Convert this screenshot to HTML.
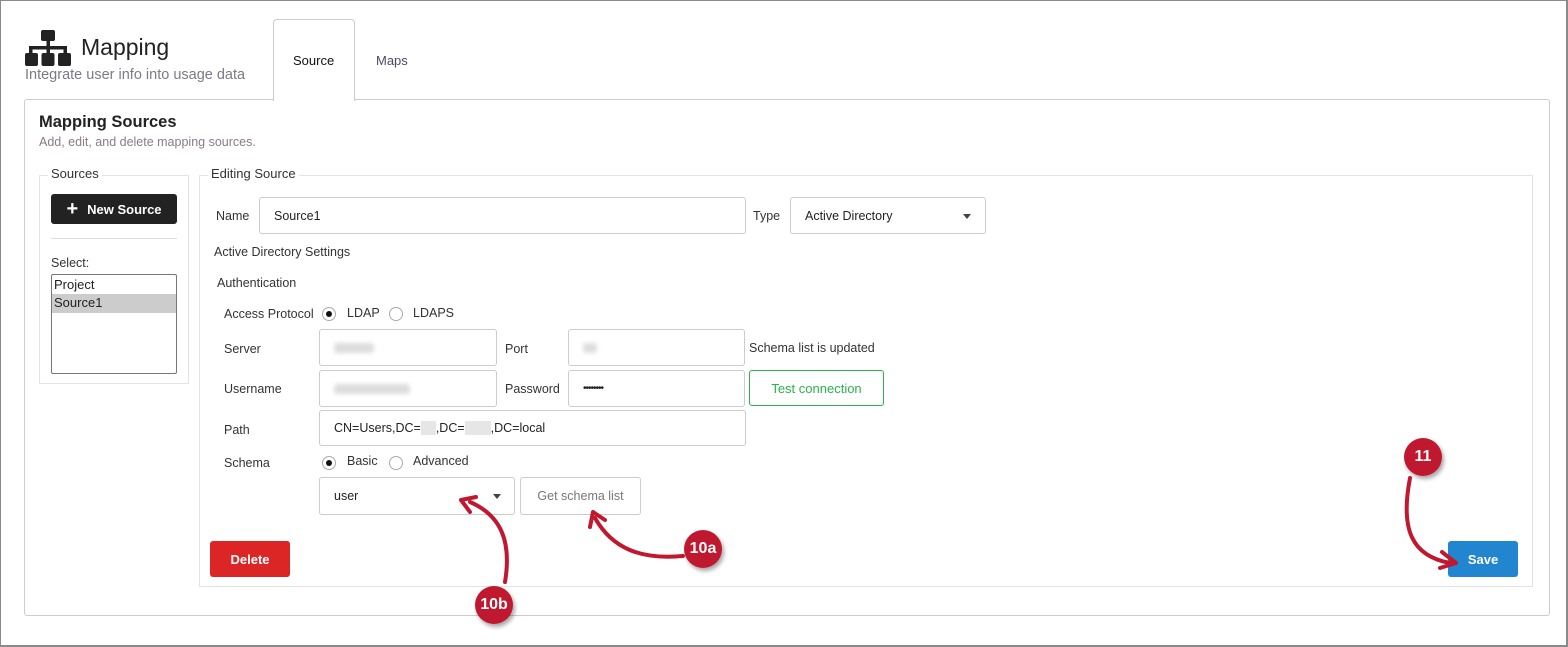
<!DOCTYPE html>
<html><head><meta charset="utf-8"><style>
*{box-sizing:border-box;margin:0;padding:0}
body{width:1568px;height:647px;position:relative;background:#fff;font-family:"Liberation Sans",sans-serif;color:#222;overflow:hidden}
.a{position:absolute}
.frame{left:0;top:0;width:1568px;height:647px;border:1px solid #8a8a8a;border-right-width:2px;border-bottom-width:2px}
.lbl{font-size:12.5px;color:#333}
.inp{position:absolute;border:1px solid #ccc;border-radius:3px;background:#fff;font-size:12.5px;padding-left:14px;display:flex;align-items:center}
.blur{display:inline-block;height:10px;background:#ddd;filter:blur(2px);border-radius:3px}
.radio{position:absolute;width:14px;height:14px;border:1px solid #aaa;border-radius:50%;background:#fff}
.radio.on::after{content:"";position:absolute;left:3px;top:3px;width:6px;height:6px;border-radius:50%;background:#111}
.badge{position:absolute;width:38px;height:38px;border-radius:50%;background:#c0182e;color:#fff;font-weight:bold;font-size:16px;display:flex;align-items:center;justify-content:center;box-shadow:2px 3px 4px rgba(0,0,0,.35)}
.caret{position:absolute;width:0;height:0;border-left:4px solid transparent;border-right:4px solid transparent;border-top:5px solid #444}
</style></head><body>
<div class="a frame"></div>
<svg class="a" style="left:25px;top:30px" width="46" height="37" viewBox="0 0 46 37">
<rect x="16" y="0" width="14" height="11" rx="2" fill="#222"/><rect x="21.5" y="10" width="3.5" height="8" fill="#222"/>
<rect x="4" y="16" width="38" height="3.5" fill="#222"/><rect x="4" y="16" width="3.5" height="10" fill="#222"/><rect x="21.5" y="16" width="3.5" height="10" fill="#222"/><rect x="38.5" y="16" width="3.5" height="10" fill="#222"/>
<rect x="0" y="23" width="13" height="13" rx="2" fill="#222"/><rect x="16.5" y="23" width="13" height="13" rx="2" fill="#222"/><rect x="33" y="23" width="13" height="13" rx="2" fill="#222"/>
</svg>
<div class="a" style="left:81px;top:34px;font-size:23px;color:#222">Mapping</div>
<div class="a" style="left:25px;top:67px;font-size:14.5px;color:#7a7a8a">Integrate user info into usage data</div>
<div class="a" style="left:24px;top:99px;width:1526px;height:517px;border:1px solid #ccc;border-radius:3px"></div>
<div class="a" style="left:273px;top:19px;width:82px;height:82px;border:1px solid #ccc;border-bottom:none;border-radius:4px 4px 0 0;background:#fff"></div>
<div class="a" style="left:293px;top:53px;font-size:13px;color:#111">Source</div>
<div class="a" style="left:376px;top:53px;font-size:13px;color:#4a4a6a">Maps</div>
<div class="a" style="left:39px;top:113px;font-size:16.5px;font-weight:bold;color:#222">Mapping Sources</div>
<div class="a" style="left:39px;top:135px;font-size:12.5px;color:#8a7a8a">Add, edit, and delete mapping sources.</div>

<div class="a" style="left:39px;top:175px;width:150px;height:209px;border:1px solid #e3e3e3"></div>
<div class="a" style="left:48px;top:166px;background:#fff;padding:0 3px;font-size:13px;color:#333">Sources</div>
<div class="a" style="left:51px;top:194px;width:126px;height:30px;background:#222;border-radius:3px;color:#fff;font-size:13px;font-weight:bold;display:flex;align-items:center;justify-content:center"><span style="font-size:20px;margin-right:9px;line-height:1">+</span>New Source</div>
<div class="a" style="left:51px;top:238px;width:126px;height:1px;background:#ddd"></div>
<div class="a" style="left:51px;top:256px;font-size:12.5px;color:#333">Select:</div>
<div class="a" style="left:51px;top:274px;width:126px;height:100px;border:1px solid #777;border-radius:2px;font-size:13px">
<div style="padding:2px 2px;height:19px">Project</div>
<div style="padding:1px 2px;height:19px;background:#ccc">Source1</div></div>

<div class="a" style="left:199px;top:175px;width:1334px;height:412px;border:1px solid #e3e3e3"></div>
<div class="a" style="left:208px;top:166px;background:#fff;padding:0 3px;font-size:13px;color:#333">Editing Source</div>

<div class="a lbl" style="left:216px;top:209px">Name</div>
<div class="inp" style="left:259px;top:197px;width:487px;height:37px">Source1</div>
<div class="a lbl" style="left:753px;top:209px">Type</div>
<div class="inp" style="left:790px;top:197px;width:196px;height:37px">Active Directory</div>
<div class="caret" style="left:963px;top:214px"></div>
<div class="a lbl" style="left:214px;top:245px">Active Directory Settings</div>
<div class="a lbl" style="left:217px;top:276px">Authentication</div>

<div class="a lbl" style="left:224px;top:307px">Access Protocol</div>
<div class="radio on" style="left:322px;top:307px"></div><div class="a lbl" style="left:347px;top:306px">LDAP</div>
<div class="radio" style="left:389px;top:307px"></div><div class="a lbl" style="left:413px;top:306px">LDAPS</div>

<div class="a lbl" style="left:224px;top:342px">Server</div>
<div class="inp" style="left:319px;top:329px;width:178px;height:37px"><span class="blur" style="width:40px"></span></div>
<div class="a lbl" style="left:505px;top:342px">Port</div>
<div class="inp" style="left:568px;top:329px;width:177px;height:37px"><span class="blur" style="width:14px"></span></div>
<div class="a lbl" style="left:749px;top:341px">Schema list is updated</div>

<div class="a lbl" style="left:224px;top:382px">Username</div>
<div class="inp" style="left:319px;top:370px;width:178px;height:37px"><span class="blur" style="width:76px"></span></div>
<div class="a lbl" style="left:505px;top:382px">Password</div>
<div class="inp" style="left:568px;top:370px;width:177px;height:37px;font-size:10px;letter-spacing:-1px">••••••••</div>
<div class="a" style="left:749px;top:370px;width:135px;height:36px;border:1px solid #2bb24c;border-radius:3px;color:#2bb24c;font-size:13px;display:flex;align-items:center;justify-content:center">Test connection</div>

<div class="a lbl" style="left:224px;top:423px">Path</div>
<div class="inp" style="left:319px;top:410px;width:427px;height:36px">CN=Users,DC=<span style="display:inline-block;width:15px;height:14px;background:#e6e6e6"></span>,DC=<span style="display:inline-block;width:26px;height:14px;background:#e6e6e6"></span>,DC=local</div>

<div class="a lbl" style="left:224px;top:456px">Schema</div>
<div class="radio on" style="left:322px;top:456px"></div><div class="a lbl" style="left:347px;top:454px">Basic</div>
<div class="radio" style="left:389px;top:456px"></div><div class="a lbl" style="left:413px;top:454px">Advanced</div>

<div class="inp" style="left:319px;top:477px;width:196px;height:38px">user</div>
<div class="caret" style="left:493px;top:494px"></div>
<div class="a" style="left:520px;top:477px;width:121px;height:38px;border:1px solid #ccc;border-radius:3px;color:#777;font-size:12.5px;display:flex;align-items:center;justify-content:center">Get schema list</div>

<div class="a" style="left:210px;top:541px;width:80px;height:36px;background:#dc2626;border-radius:3px;color:#fff;font-size:13px;font-weight:bold;display:flex;align-items:center;justify-content:center">Delete</div>
<div class="a" style="left:1448px;top:541px;width:70px;height:36px;background:#2185d0;border-radius:3px;color:#fff;font-size:13px;font-weight:bold;display:flex;align-items:center;justify-content:center">Save</div>

<svg class="a" style="left:0;top:0" width="1568" height="647">
<g fill="none" stroke="#c0182e" stroke-width="4" stroke-linecap="round">
<path d="M505 582 C512 540 500 515 470 502"/><path d="M461 500 L476 497 M461 500 L470 512"/>
<path d="M683 556 C640 560 612 548 595 518"/><path d="M593 512 L590 527 M593 512 L605 520"/>
<path d="M1410 478 C1400 530 1412 556 1450 563"/><path d="M1456 563 L1442 552 M1456 563 L1440 568"/>
</g></svg>
<div class="badge" style="left:684px;top:530px">10a</div>
<div class="badge" style="left:475px;top:586px">10b</div>
<div class="badge" style="left:1404px;top:438px">11</div>
</body></html>
